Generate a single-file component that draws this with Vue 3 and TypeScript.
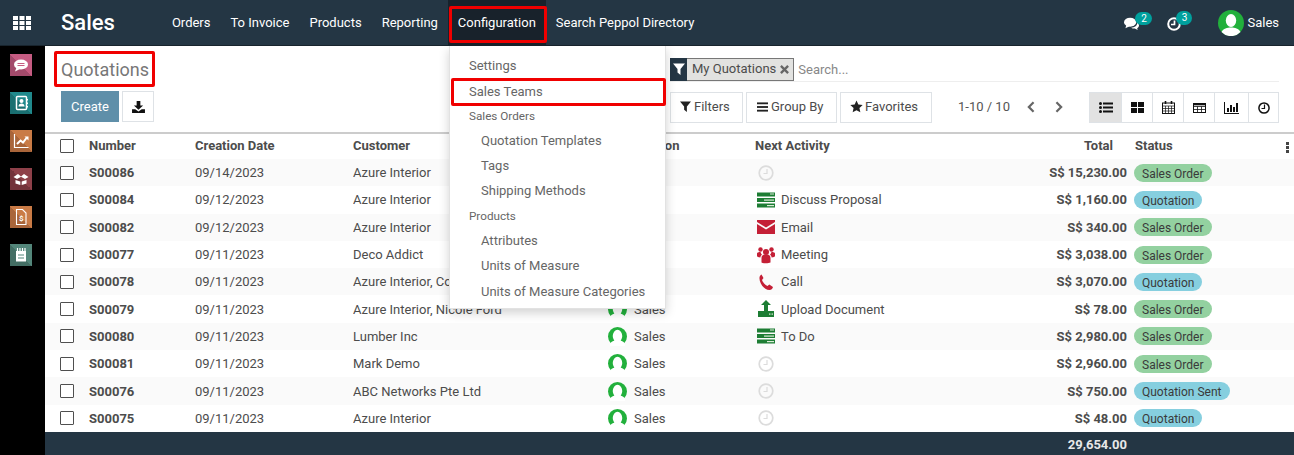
<script setup lang="ts">
// Quotation row payload
interface QuotationRow {
  number: string
  date: string
  customer: string
  activity: string
  activityIcon: string
  total: string
  status: string
}

const navItems = ['Orders', 'To Invoice', 'Products', 'Reporting', 'Configuration', 'Search Peppol Directory']

const sideApps = [
  { id: 'chat', color: '#c65c82', dark: '#a34a6b' },
  { id: 'contacts', color: '#20898c', dark: '#1a6f71' },
  { id: 'chart', color: '#c97b46', dark: '#a9653a' },
  { id: 'box', color: '#8e4049', dark: '#73333b' },
  { id: 'invoice', color: '#c97b46', dark: '#a9653a' },
  { id: 'doc', color: '#53867a', dark: '#436e64' },
]

const menuEntries = [
  { label: 'Settings', kind: 'item' },
  { label: 'Sales Teams', kind: 'marked' },
  { label: 'Sales Orders', kind: 'header' },
  { label: 'Quotation Templates', kind: 'sub' },
  { label: 'Tags', kind: 'sub' },
  { label: 'Shipping Methods', kind: 'sub' },
  { label: 'Products', kind: 'header' },
  { label: 'Attributes', kind: 'sub' },
  { label: 'Units of Measure', kind: 'sub' },
  { label: 'Units of Measure Categories', kind: 'sub' },
]

const rows: QuotationRow[] = [
  { number: 'S00086', date: '09/14/2023', customer: 'Azure Interior', activity: '', activityIcon: 'none', total: 'S$ 15,230.00', status: 'Sales Order' },
  { number: 'S00084', date: '09/12/2023', customer: 'Azure Interior', activity: 'Discuss Proposal', activityIcon: 'tasks', total: 'S$ 1,160.00', status: 'Quotation' },
  { number: 'S00082', date: '09/12/2023', customer: 'Azure Interior', activity: 'Email', activityIcon: 'mail', total: 'S$ 340.00', status: 'Sales Order' },
  { number: 'S00077', date: '09/11/2023', customer: 'Deco Addict', activity: 'Meeting', activityIcon: 'users', total: 'S$ 3,038.00', status: 'Sales Order' },
  { number: 'S00078', date: '09/11/2023', customer: 'Azure Interior, Colleen Diaz', activity: 'Call', activityIcon: 'phone', total: 'S$ 3,070.00', status: 'Quotation' },
  { number: 'S00079', date: '09/11/2023', customer: 'Azure Interior, Nicole Ford', activity: 'Upload Document', activityIcon: 'upload', total: 'S$ 78.00', status: 'Sales Order' },
  { number: 'S00080', date: '09/11/2023', customer: 'Lumber Inc', activity: 'To Do', activityIcon: 'tasks', total: 'S$ 2,980.00', status: 'Sales Order' },
  { number: 'S00081', date: '09/11/2023', customer: 'Mark Demo', activity: '', activityIcon: 'none', total: 'S$ 2,960.00', status: 'Sales Order' },
  { number: 'S00076', date: '09/11/2023', customer: 'ABC Networks Pte Ltd', activity: '', activityIcon: 'none', total: 'S$ 750.00', status: 'Quotation Sent' },
  { number: 'S00075', date: '09/11/2023', customer: 'Azure Interior', activity: '', activityIcon: 'none', total: 'S$ 48.00', status: 'Quotation' },
]

function statusClass(status: string): string {
  return status === 'Sales Order' ? 'badge--order' : 'badge--quote'
}
</script>

<template>
  <div class="app">
    <header class="navbar">
      <svg class="apps-icon" viewBox="0 0 18 14" fill="#fff">
        <rect x="0" y="0" width="5" height="4" /><rect x="6.5" y="0" width="5" height="4" /><rect x="13" y="0" width="5" height="4" />
        <rect x="0" y="5" width="5" height="4" /><rect x="6.5" y="5" width="5" height="4" /><rect x="13" y="5" width="5" height="4" />
        <rect x="0" y="10" width="5" height="4" /><rect x="6.5" y="10" width="5" height="4" /><rect x="13" y="10" width="5" height="4" />
      </svg>
      <span class="brand">Sales</span>
      <nav class="nav-menu">
        <a
          v-for="item in navItems"
          :key="item"
          class="nav-link"
          :class="{ 'nav-link--open': item === 'Configuration' }"
        >{{ item }}</a>
      </nav>
      <div class="systray">
        <span class="tray-item tray-item--chat">
          <svg class="tray-icon" viewBox="0 0 16 14" fill="#fff">
            <ellipse cx="6.5" cy="5" rx="6.5" ry="4.8" />
            <path d="M2.5 8l-1 3.6L6 9.5z" />
            <path d="M14 5.500c1.400.9 2 2 2 3.100 0 1.200-.8 2.200-2 2.900l.6 2-3-1.600c-1.500.1-3-.2-4-.9 3.700 0 6.900-2.200 6.400-5.500z" />
          </svg>
          <span class="tray-badge">2</span>
        </span>
        <span class="tray-item tray-item--clock">
          <svg class="tray-icon tray-icon--clock" viewBox="0 0 14 14" fill="none" stroke="#fff">
            <circle cx="7" cy="7" r="5.800" stroke-width="2" />
            <path d="M7.500 3.500v4H4" stroke-width="1.700" />
          </svg>
          <span class="tray-badge tray-badge--clock">3</span>
        </span>
        <span class="user-menu">
          <svg class="user-avatar" viewBox="0 0 26 26">
            <circle cx="13" cy="13" r="13" fill="#22b03c" />
            <ellipse cx="13" cy="10.500" rx="5.200" ry="6.500" fill="#fff" />
            <path d="M3.500 22c2-3.500 5.500-4.500 9.500-4.500s7.500 1 9.500 4.500a13 13 0 0 1-19 0z" fill="#fff" />
          </svg>
          <span>Sales</span>
        </span>
      </div>
    </header>

    <div class="workspace">
      <aside class="sidebar">
        <span
          v-for="appItem in sideApps"
          :key="appItem.id"
          class="side-app"
          :style="{ background: `linear-gradient(45deg, ${appItem.dark} 50%, ${appItem.color} 50%)` }"
        >
          <svg viewBox="0 0 22 22" class="side-glyph">
            <g v-if="appItem.id === 'chat'">
              <ellipse cx="11" cy="10.500" rx="7" ry="5" fill="#fff" />
              <path d="M6.500 13.500l-1.500 4 5-2.500z" fill="#fff" />
              <path d="M7.500 9.500h7M7.500 11.500h7" stroke="#c65c82" stroke-width="1" />
            </g>
            <g v-else-if="appItem.id === 'contacts'">
              <rect x="6.500" y="4.500" width="10" height="13" rx="1" fill="none" stroke="#fff" stroke-width="1.500" />
              <circle cx="11.500" cy="9" r="2" fill="#fff" />
              <path d="M8.500 14.500c0-2 1.200-3 3-3s3 1 3 3z" fill="#fff" />
              <path d="M17.500 7v1.500M17.500 10.500V12M17.500 14v1.500" stroke="#fff" stroke-width="1" />
            </g>
            <g v-else-if="appItem.id === 'chart'">
              <path d="M4.500 4v13.500H18.500" fill="none" stroke="#fff" stroke-width="1.200" />
              <path d="M7 14l3.500-3.500 2.500 2 3.500-4.500" fill="none" stroke="#fff" stroke-width="2" />
              <path d="M14.500 6.500h4v4z" fill="#fff" />
            </g>
            <g v-else-if="appItem.id === 'box'">
              <path d="M3.500 9l4.500-3 3 2.500 3-2.500 4.500 3-3.500 2-4-2.200-4 2.200z" fill="#fff" />
              <path d="M5.500 12l4.800 1.500V17l-4.800-1.500zM16.500 12l-4.800 1.500V17l4.800-1.500z" fill="#fff" />
            </g>
            <g v-else-if="appItem.id === 'invoice'">
              <path d="M6.500 3.500h6l3.500 3.500v11.500H6.500z" fill="none" stroke="#fff" stroke-width="1.100" />
              <text x="11.200" y="15" class="side-dollar">$</text>
            </g>
            <g v-else>
              <path d="M6 7h10v10.500H6z" fill="#fff" />
              <path d="M7.500 4v4M10 4v4M12.500 4v4M15 4v4" stroke="#fff" stroke-width="1.200" />
              <path d="M8 11h6M8 14h6" stroke="#53867a" stroke-width="1.200" />
            </g>
          </svg>
        </span>
      </aside>

      <main class="content">
        <section class="control-panel">
          <div class="panel-left">
            <h1 class="page-title">Quotations</h1>
            <div class="panel-actions">
              <button class="btn btn--primary">Create</button>
              <button class="btn btn--icon">
                <svg viewBox="0 0 14 13" width="13" height="12" fill="#111">
                  <path d="M5 0h4v5h3L7 9.500 2 5h3z" />
                  <path d="M0 9h3.500L7 11.500 10.500 9H14v4H0z" />
                </svg>
              </button>
            </div>
          </div>
          <div class="panel-right">
            <div class="search-bar">
              <span class="facet">
                <span class="facet__icon">
                  <svg viewBox="0 0 12 12" width="12" height="12" fill="#fff"><path d="M0 .5h12L7.500 6v6L4.500 9.500V6z" /></svg>
                </span>
                <span class="facet__label">My Quotations</span>
                <svg class="facet__close" viewBox="0 0 10 10" width="9" height="9" stroke="#666" stroke-width="2.600"><path d="M1 1l8 8M9 1l-8 8" /></svg>
              </span>
              <span class="search-input">Search...</span>
            </div>
            <div class="panel-tools">
              <div class="filter-group">
                <button class="btn btn--tool">
                  <svg viewBox="0 0 12 12" width="11" height="11" fill="#222"><path d="M0 .5h12L7.500 6v6L4.500 9.500V6z" /></svg>
                  Filters
                </button>
                <button class="btn btn--tool">
                  <svg viewBox="0 0 12 10" width="11" height="10" fill="#222"><rect width="12" height="2" /><rect y="4" width="12" height="2" /><rect y="8" width="12" height="2" /></svg>
                  Group By
                </button>
                <button class="btn btn--tool">
                  <svg viewBox="0 0 24 24" width="13" height="13" fill="#222"><path d="M12 1l3.400 7.400 8 .9-6 5.400 1.700 8L12 18.700l-7.100 4 1.700-8-6-5.400 8-.9z" /></svg>
                  Favorites
                </button>
              </div>
              <div class="pager">
                <span>1-10 / 10</span>
                <svg viewBox="0 0 10 14" width="10" height="12" fill="none" stroke="#666" stroke-width="2.600"><path d="M8 1.500L2.500 7 8 12.500" /></svg>
                <svg viewBox="0 0 10 14" width="10" height="12" fill="none" stroke="#666" stroke-width="2.600"><path d="M2 1.500L7.500 7 2 12.500" /></svg>
              </div>
              <div class="view-switch">
                <button class="view-btn view-btn--active">
                  <svg viewBox="0 0 14 11" width="14" height="11" fill="#111">
                    <circle cx="1.500" cy="1.500" r="1.500" /><circle cx="1.500" cy="5.500" r="1.500" /><circle cx="1.500" cy="9.500" r="1.500" />
                    <rect x="4" y=".5" width="10" height="2" /><rect x="4" y="4.500" width="10" height="2" /><rect x="4" y="8.500" width="10" height="2" />
                  </svg>
                </button>
                <button class="view-btn">
                  <svg viewBox="0 0 13 11" width="13" height="11" fill="#111">
                    <rect width="6" height="5" /><rect x="7" width="6" height="5" /><rect y="6" width="6" height="5" /><rect x="7" y="6" width="6" height="5" />
                  </svg>
                </button>
                <button class="view-btn">
                  <svg viewBox="0 0 13 13" width="13" height="13" fill="none" stroke="#111">
                    <rect x=".5" y="2" width="12" height="10.500" />
                    <path d="M.5 5h12M.5 7.500h12M.5 10h12M3.500 5v7.500M6.500 5v7.500M9.500 5v7.500" stroke-width=".7" />
                    <path d="M3.500 0v3M9.500 0v3" stroke-width="1.600" />
                  </svg>
                </button>
                <button class="view-btn">
                  <svg viewBox="0 0 13 10" width="13" height="10" fill="none" stroke="#111">
                    <rect x=".5" y=".5" width="12" height="9" />
                    <path d="M.5 3.500h12M.5 6.500h12M4.500 3.500v6M8.500 3.500v6" stroke-width=".8" />
                    <path d="M.5 1.500h12" stroke-width="1.600" />
                  </svg>
                </button>
                <button class="view-btn">
                  <svg viewBox="0 0 15 12" width="15" height="12" fill="#111">
                    <rect x="0" y="0" width="1" height="12" /><rect y="11" width="15" height="1" />
                    <rect x="3" y="6" width="2" height="4" /><rect x="6" y="3" width="2" height="7" /><rect x="9" y="5" width="2" height="5" /><rect x="12" y="1" width="2" height="9" />
                  </svg>
                </button>
                <button class="view-btn">
                  <svg viewBox="0 0 12 12" width="12" height="12" fill="none" stroke="#111">
                    <circle cx="6" cy="6" r="5.100" stroke-width="1.500" />
                    <path d="M6.500 2.500v4H3.500" stroke-width="1.200" />
                  </svg>
                </button>
              </div>
            </div>
          </div>
        </section>

        <section class="list">
          <div class="list-row list-row--head">
            <span class="check"></span>
            <span>Number</span>
            <span>Creation Date</span>
            <span>Customer</span>
            <span>Salesperson</span>
            <span>Next Activity</span>
            <span class="cell-total head-total">Total</span>
            <span class="cell-status head-status">Status</span>
            <svg class="col-options" viewBox="0 0 3 11" width="3" height="11" fill="#444">
              <rect width="3" height="3" /><rect y="4" width="3" height="3" /><rect y="8" width="3" height="3" />
            </svg>
          </div>
          <div v-for="row in rows" :key="row.number" class="list-row">
            <span class="check"></span>
            <strong>{{ row.number }}</strong>
            <span>{{ row.date }}</span>
            <span class="cell-clip">{{ row.customer }}</span>
            <span class="cell-person">
              <svg viewBox="0 0 20 20" width="19" height="19">
                <circle cx="10" cy="10" r="10" fill="#22b03c" />
                <ellipse cx="10" cy="9.500" rx="5" ry="6.500" fill="#fff" />
                <path d="M2 17.500c2-2.500 4.500-3.500 8-3.500s6 1 8 3.500V20H2z" fill="#fff" />
              </svg>
              Sales
            </span>
            <span class="cell-activity">
              <svg v-if="row.activityIcon === 'none'" class="act-icon" viewBox="0 0 18 18" fill="none" stroke="#dcdcdc">
                <circle cx="9" cy="9" r="6.800" stroke-width="1.700" />
                <path d="M10 5v4.500H6.500" stroke-width="1.200" />
              </svg>
              <svg v-else-if="row.activityIcon === 'tasks'" class="act-icon" viewBox="0 0 18 18">
                <rect y="1.500" width="18" height="4" fill="#1d7d34" />
                <rect y="7" width="18" height="4" fill="#1d7d34" />
                <rect y="12.500" width="18" height="4" fill="#1d7d34" />
                <rect x="13" y="2.500" width="4" height="1" fill="#dcecd8" />
                <rect x="7" y="8.500" width="10" height="1.200" fill="#dcecd8" />
                <rect x="10" y="14" width="7" height="1.200" fill="#dcecd8" />
              </svg>
              <svg v-else-if="row.activityIcon === 'mail'" class="act-icon" viewBox="0 0 18 18">
                <path d="M0 2h18v2L9 9.500 0 4z" fill="#c41f36" />
                <path d="M0 6l9 5.500L18 6v10H0z" fill="#c41f36" />
              </svg>
              <svg v-else-if="row.activityIcon === 'users'" class="act-icon" viewBox="0 0 18 18" fill="#c41f36">
                <circle cx="9" cy="6" r="3" />
                <circle cx="3.500" cy="3.500" r="2.200" />
                <circle cx="14.500" cy="3.500" r="2.200" />
                <path d="M4.500 12c0-2.500 1.500-3.500 4.500-3.500s4.500 1 4.500 3.500v4.500c-2 1-7 1-9 0z" />
                <path d="M0 7.500C0 6.500 1.500 6 3.500 6c.3 1.200.8 2 1.500 2.700-1 .6-1.500 1.500-1.700 2.800C1.500 11.300 0 10.800 0 10zM18 7.500c0-1-1.500-1.500-3.500-1.500-.3 1.200-.8 2-1.500 2.700 1 .6 1.500 1.500 1.700 2.800 1.800-.2 3.300-.7 3.300-1.500z" />
              </svg>
              <svg v-else-if="row.activityIcon === 'phone'" class="act-icon" viewBox="0 0 18 18" fill="#c41f36">
                <path d="M4.500 1.500L6.500 5 5 7c.8 2.500 3 5 5.500 6l1.800-1.500 3.700 2.500c-.5 1.800-1.700 3-3.500 3C7 17 2 10 2.500 4.500c.1-1.200 1-2.500 2-3z" />
              </svg>
              <svg v-else class="act-icon" viewBox="0 0 18 18">
                <path d="M9 0l5 5h-3v6.500H7V5H4z" fill="#1d7d34" />
                <rect x="1" y="11" width="16" height="6" fill="#1d7d34" />
                <rect x="12" y="13.500" width="1.500" height="1.200" fill="#dcecd8" />
                <rect x="14.500" y="13.500" width="1.500" height="1.200" fill="#dcecd8" />
              </svg>
              {{ row.activity }}
            </span>
            <strong class="cell-total">{{ row.total }}</strong>
            <span class="cell-status">
              <span class="badge" :class="statusClass(row.status)">{{ row.status }}</span>
            </span>
          </div>
          <div class="list-row list-row--foot">
            <span class="foot-span"></span>
            <strong class="cell-total">29,654.00</strong>
          </div>
        </section>
      </main>
    </div>

    <ul class="dropdown">
      <li
        v-for="entry in menuEntries"
        :key="entry.label"
        class="dropdown__entry"
        :class="`dropdown__entry--${entry.kind}`"
      >{{ entry.label }}</li>
    </ul>
  </div>
</template>

<style>
html,
body {
  margin: 0;
  background: #fff;
}
</style>

<style scoped>
.app {
  position: relative;
  width: 1294px;
  height: 455px;
  overflow: hidden;
  font-family: Roboto, "Liberation Sans", sans-serif;
  font-size: 13px;
  color: #4c4c4c;
}

.navbar {
  height: 46px;
  box-sizing: border-box;
  display: flex;
  align-items: center;
  background: #243644;
  border-bottom: 1px solid #18242d;
  color: #fff;
}

.apps-icon {
  width: 18px;
  height: 14px;
  margin-left: 13px;
}

.brand {
  margin-left: 30px;
  font-size: 22px;
  font-weight: 500;
}

.nav-menu {
  display: flex;
  align-self: stretch;
  margin-left: 47px;
}

.nav-link {
  position: relative;
  display: flex;
  align-items: center;
  padding: 0 10px;
  height: 45px;
}

.nav-link--open {
  background: #18222b;
}

.nav-link--open::after {
  content: "";
  position: absolute;
  inset: 6px -1px 2px 1px;
  border: 3px solid #f00000;
  border-radius: 2px;
}

.systray {
  margin-left: auto;
  display: flex;
  align-items: center;
  padding-right: 15px;
}

.tray-item {
  position: relative;
  display: block;
  height: 16px;
}

.tray-item--chat {
  width: 28px;
}

.tray-item--clock {
  width: 25px;
  margin-left: 15px;
}

.tray-icon {
  position: absolute;
  left: 0;
  top: 2px;
  width: 15px;
  height: 14px;
}

.tray-icon--clock {
  width: 14px;
}

.tray-badge {
  position: absolute;
  left: 11px;
  top: -3px;
  width: 17px;
  height: 13px;
  border-radius: 7px;
  background: #00a09d;
  font-size: 10px;
  line-height: 13px;
  text-align: center;
}

.tray-badge--clock {
  left: 9px;
  top: -4px;
  width: 16px;
  height: 14px;
}

.user-menu {
  display: flex;
  align-items: center;
  gap: 3px;
  margin-left: 26px;
}

.user-avatar {
  width: 26px;
  height: 26px;
}

.workspace {
  display: flex;
  height: 409px;
}

.sidebar {
  width: 45px;
  flex: none;
  box-sizing: border-box;
  background: #000;
  padding-top: 8px;
  display: flex;
  flex-direction: column;
  gap: 16px;
}

.side-app {
  display: block;
  width: 22px;
  height: 22px;
  margin-left: 10px;
}

.side-glyph {
  display: block;
  width: 22px;
  height: 22px;
}

.side-dollar {
  fill: #fff;
  font-size: 8px;
  font-weight: 700;
  text-anchor: middle;
}

.content {
  flex: 1;
  min-width: 0;
}

.control-panel {
  height: 86px;
  box-sizing: border-box;
  display: grid;
  grid-template-columns: 609px 609px;
  padding-left: 16px;
}

.panel-left {
  display: flex;
  flex-direction: column;
}

.page-title {
  position: relative;
  width: fit-content;
  margin: 11px 0 0;
  height: 34px;
  font-size: 18px;
  line-height: 25px;
  font-weight: 400;
  color: #777;
}

.page-title::after {
  content: "";
  position: absolute;
  inset: -6px -6px 4px -7px;
  border: 3px solid #f00000;
  border-radius: 2px;
}

.panel-actions {
  display: flex;
  gap: 3px;
}

.btn {
  height: 31px;
  box-sizing: border-box;
  padding: 0;
  font: inherit;
  color: #4c4c4c;
  background: #fff;
  border: 1px solid #dee2e6;
}

.btn--primary {
  width: 58px;
  background: #5f8fa9;
  border-color: #5f8fa9;
  color: #fff;
}

.btn--icon {
  width: 32px;
  display: flex;
  align-items: center;
  justify-content: center;
}

.panel-right {
  display: flex;
  flex-direction: column;
}

.search-bar {
  height: 24px;
  margin-top: 11px;
  display: flex;
  align-items: center;
  border-bottom: 1px solid #eee;
}

.facet {
  height: 23px;
  box-sizing: border-box;
  display: flex;
  align-items: center;
  background: #e2e2e0;
  border: 1px solid #777;
  border-left: 0;
  color: #4c4c4c;
}

.facet__icon {
  width: 17px;
  height: 23px;
  display: flex;
  align-items: center;
  justify-content: center;
  background: #243644;
}

.facet__label {
  margin-left: 5px;
  padding-bottom: 2px;
}

.facet__close {
  margin: 1px 4px 0 4px;
}

.search-input {
  margin-left: 4px;
  color: #888;
}

.panel-tools {
  margin-top: 10px;
  display: flex;
  align-items: center;
}

.filter-group {
  display: flex;
  gap: 3px;
}

.btn--tool {
  display: flex;
  align-items: center;
  gap: 3px;
  padding: 0 0 2px 9px;
  white-space: nowrap;
}

.btn--tool:nth-child(1) {
  width: 73px;
}

.btn--tool:nth-child(2) {
  width: 91px;
  padding-left: 10px;
}

.btn--tool:nth-child(3) {
  width: 92px;
  gap: 2px;
}

.pager {
  display: flex;
  align-items: center;
  gap: 16px;
  margin-left: 26px;
  padding-bottom: 2px;
  color: #555;
}

.pager svg:last-child {
  margin-left: 2px;
}

.view-switch {
  display: flex;
  margin-left: auto;
  border: 1px solid #dee2e6;
  height: 31px;
  box-sizing: border-box;
}

.view-btn {
  width: 31px;
  padding: 0;
  display: flex;
  align-items: center;
  justify-content: center;
  background: #fff;
  border: 0;
  border-left: 1px solid #dee2e6;
}

.view-btn:first-child {
  border-left: 0;
}

.view-btn:nth-child(5) {
  width: 34px;
}

.view-btn:last-child {
  width: 30px;
}

.view-btn--active {
  background: #e2e2e2;
}

.list-row {
  height: 27.3px;
  box-sizing: border-box;
  display: grid;
  grid-template-columns: 44px 106px 158px 254px 148px 200px 172px 167px;
  align-items: center;
  white-space: nowrap;
}

.list-row:nth-child(even) {
  background: #fafafa;
}

.list-row--head {
  position: relative;
  height: 27px;
  padding-bottom: 2px;
  border-top: 2px solid #ccc;
  font-weight: 700;
}

.list-row--foot {
  height: 24px;
  background: #243644 !important;
  color: #e8e8e8;
  grid-template-columns: 710px 372px;
  padding-top: 1px;
}

.list-row strong {
  font-weight: 700;
}

.check {
  width: 14px;
  height: 14px;
  box-sizing: border-box;
  margin-left: 15px;
  border: 1.500px solid #4f4f4f;
  background: #fff;
  border-radius: 1px;
}

.cell-clip {
  overflow: hidden;
}

.cell-person {
  display: flex;
  align-items: center;
  gap: 7px;
  padding-left: 1px;
}

.cell-activity {
  display: flex;
  align-items: center;
  gap: 6px;
  margin-left: 2px;
}

.act-icon {
  width: 18px;
  height: 18px;
  flex: none;
}

.cell-total {
  text-align: right;
}

.head-total {
  padding-right: 14px;
}

.cell-status {
  padding-left: 7px;
  display: flex;
  align-items: center;
}

.head-status {
  padding-left: 8px;
}

.col-options {
  position: absolute;
  right: 5px;
  top: 8px;
}

.badge {
  height: 18px;
  padding: 0 8px;
  border-radius: 9px;
  font-size: 12px;
  line-height: 20px;
  color: #3a3a3a;
}

.badge--order {
  background: #93d1a0;
}

.badge--quote {
  background: #86cfdf;
}

.dropdown {
  position: absolute;
  left: 449px;
  top: 46px;
  width: 217px;
  height: 263px;
  box-sizing: border-box;
  margin: 0;
  padding: 7px 0 0;
  list-style: none;
  background: #fff;
  border: 1px solid #e2e2e2;
  border-top: 0;
  box-shadow: 0 4px 10px rgba(0, 0, 0, .18);
  color: #666;
}

.dropdown__entry {
  position: relative;
  height: 25px;
  line-height: 25px;
  padding-left: 19px;
}

.dropdown__entry--marked,
.dropdown__entry:nth-child(7),
.dropdown__entry:last-child {
  margin-top: 1px;
}

.dropdown__entry--header {
  font-size: 11.700px;
  height: 24px;
}

.dropdown__entry--sub {
  padding-left: 31px;
}

.dropdown__entry--marked::after {
  content: "";
  position: absolute;
  left: 1px;
  right: -1px;
  top: -1px;
  bottom: -2px;
  border: 3px solid #f00000;
  border-radius: 2px;
}
</style>
